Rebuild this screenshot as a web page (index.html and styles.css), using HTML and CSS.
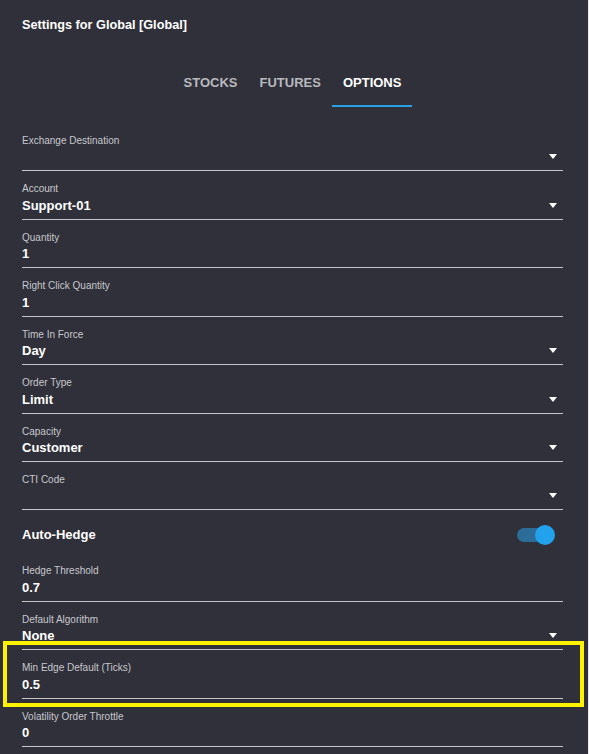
FILE: index.html
```html
<!DOCTYPE html>
<html>
<head>
<meta charset="utf-8">
<link rel="stylesheet" href="styles.css">
</head>
<body>
<div class="panel">
  <h1 class="title">Settings for Global [Global]</h1>
  <nav class="tabs">
    <div class="tab">STOCKS</div>
    <div class="tab">FUTURES</div>
    <div class="tab active">OPTIONS</div>
  </nav>
  <div class="form">
    <div class="field select"><div class="label">Exchange Destination</div><div class="value"></div><span class="arrow"></span></div>
    <div class="field select"><div class="label">Account</div><div class="value">Support-01</div><span class="arrow"></span></div>
    <div class="field"><div class="label">Quantity</div><div class="value">1</div></div>
    <div class="field"><div class="label">Right Click Quantity</div><div class="value">1</div></div>
    <div class="field select"><div class="label">Time In Force</div><div class="value">Day</div><span class="arrow"></span></div>
    <div class="field select"><div class="label">Order Type</div><div class="value">Limit</div><span class="arrow"></span></div>
    <div class="field select"><div class="label">Capacity</div><div class="value">Customer</div><span class="arrow"></span></div>
    <div class="field select"><div class="label">CTI Code</div><div class="value"></div><span class="arrow"></span></div>
    <div class="switch-row">
      <span class="switch-label">Auto-Hedge</span>
      <span class="switch"><span class="track"></span><span class="thumb"></span></span>
    </div>
    <div class="field"><div class="label">Hedge Threshold</div><div class="value">0.7</div></div>
    <div class="field select"><div class="label">Default Algorithm</div><div class="value">None</div><span class="arrow"></span></div>
    <div class="field highlighted"><div class="label">Min Edge Default (Ticks)</div><div class="value">0.5</div></div>
    <div class="field"><div class="label">Volatility Order Throttle</div><div class="value">0</div></div>
  </div>
</div>
</body>
</html>
```
FILE: styles.css
```css
html, body {
  margin: 0;
  padding: 0;
  background: #e8e8ea;
  height: 100%;
  overflow: hidden;
}
.panel {
  width: 588px;
  height: 754px;
  background: #2f3039;
  box-sizing: border-box;
  padding: 17px 25px 0 22px;
  font-family: "Liberation Sans", Arial, sans-serif;
  color: #fff;
}
.title {
  margin: 0;
  font-size: 12.7px;
  line-height: 16px;
  font-weight: bold;
  color: #fff;
}
.tabs {
  display: flex;
  justify-content: center;
  margin-top: 26px;
  padding-left: 0;
}
.tab {
  font-size: 13px;
  font-weight: bold;
  color: #b9b9be;
  padding: 0 11px;
  height: 46px;
  line-height: 47px;
  border-bottom: 2px solid transparent;
}
.tab.active {
  color: #fff;
  border-bottom-color: #2a9fe2;
}
.form {
  margin-top: 16px;
  display: flex;
  flex-direction: column;
}
.field {
  position: relative;
  border-bottom: 1px solid #c6c6ca;
  padding-top: 12px;
  box-sizing: content-box;
  height: 35.43px;
}
.label {
  font-size: 10px;
  line-height: 12px;
  color: #c8c8ce;
}
.value {
  margin-top: 1.5px;
  font-size: 13px;
  font-weight: bold;
  line-height: 18px;
  height: 18px;
  color: #fff;
}
.arrow {
  position: absolute;
  right: 6px;
  bottom: 11px;
  width: 0;
  height: 0;
  border-left: 4.5px solid transparent;
  border-right: 4.5px solid transparent;
  border-top: 5px solid #fff;
}
.switch-row {
  display: flex;
  align-items: center;
  justify-content: space-between;
  height: 37px;
  padding-top: 6px;
}
.switch-label {
  font-size: 13px;
  font-weight: bold;
  color: #fff;
}
.switch {
  position: relative;
  width: 38px;
  height: 20px;
  margin-right: 8px;
}
.track {
  position: absolute;
  left: 0;
  top: 3px;
  width: 36px;
  height: 14px;
  border-radius: 7px;
  background: #2b6c98;
}
.thumb {
  position: absolute;
  right: 0;
  top: 0;
  width: 20px;
  height: 20px;
  border-radius: 50%;
  background: #22a2ec;
}
.highlighted::after {
  content: "";
  position: absolute;
  left: -19px;
  right: -21px;
  top: -9px;
  bottom: -9px;
  border: 4.5px solid #fff200;
}
```
